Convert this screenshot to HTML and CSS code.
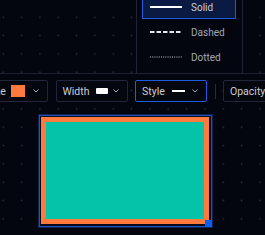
FILE: index.html
```html
<!DOCTYPE html>
<html lang="en">
<head>
    <meta charset="UTF-8">
    <meta name="viewport" content="width=device-width, initial-scale=1.0">
    <title>Shape style</title>
    <link rel="stylesheet" href="styles.css">
</head>
<body>
    <!-- 上方区域 + 线型下拉菜单 -->
    <div class="top">
        <ul class="menu">
            <li class="item selected">
                <svg class="preview" width="32" height="4"><line x1="0" y1="2" x2="32" y2="2" stroke="#fff" stroke-width="2"/></svg>
                <span>Solid</span>
            </li>
            <li class="item">
                <svg class="preview" width="32" height="4"><line x1="0" y1="2" x2="32" y2="2" stroke="#e6e8ee" stroke-width="2" stroke-dasharray="4.5 2"/></svg>
                <span>Dashed</span>
            </li>
            <li class="item">
                <svg class="preview" width="32" height="4"><line x1="0" y1="2" x2="32" y2="2" stroke="#c4c8d2" stroke-width="1" stroke-dasharray="1 1.2"/></svg>
                <span>Dotted</span>
            </li>
        </ul>
    </div>

    <!-- 工具栏 -->
    <div class="toolbar">
        <div class="btn btn-stroke">
            <span>Stroke</span>
            <i class="swatch"></i>
            <svg class="chev" width="6" height="4"><path d="M0.5 0.5 L3 3 L5.5 0.5" fill="none" stroke="#a9aeb9" stroke-width="1"/></svg>
        </div>
        <div class="btn">
            <span>Width</span>
            <i class="width-chip"></i>
            <svg class="chev" width="6" height="4"><path d="M0.5 0.5 L3 3 L5.5 0.5" fill="none" stroke="#a9aeb9" stroke-width="1"/></svg>
        </div>
        <div class="btn active">
            <span>Style</span>
            <i class="style-line"></i>
            <svg class="chev" width="6" height="4"><path d="M0.5 0.5 L3 3 L5.5 0.5" fill="none" stroke="#a9aeb9" stroke-width="1"/></svg>
        </div>
        <i class="sep"></i>
        <div class="btn">
            <span>Opacity</span>
        </div>
    </div>

    <!-- 画布 -->
    <div class="canvas">
        <div class="selection">
            <div class="shape"></div>
            <i class="handle"></i>
        </div>
    </div>
</body>
</html>
```

FILE: styles.css
```css
* {
    margin: 0;
    padding: 0;
    box-sizing: border-box;
}
ul {
    list-style: none;
}
body {
    width: 265px;
    height: 235px;
    overflow: hidden;
    font-family: Roboto, "Liberation Sans", sans-serif;
    color: #c9cdd6;
    background-color: #03050f;
    background-image: radial-gradient(circle, #262a3b 0.8px, transparent 1.1px);
    background-size: 18.33px 18.33px;
    background-position: -5.9px 8.1px;
}
.top {
    height: 73px;
    position: relative;
}
/* 下拉菜单 */
.menu {
    position: absolute;
    left: 136px;
    top: -6px;
    width: 107px;
    height: 80px;
    padding: 0 6px 0 5px;
    background: #04060f;
    border: 1px solid #1f2334;
    display: flex;
    flex-direction: column;
    gap: 1px;
}
.item {
    height: 24px;
    display: flex;
    align-items: center;
    padding-left: 7px;
    border: 1px solid transparent;
    font-size: 10px;
    color: #a3a8b4;
}
.item .preview {
    margin-right: 9px;
}
.item.selected {
    background: #0a1a42;
    border-color: #1b5ce0;
    color: #c9cdd6;
}
/* 工具栏 */
.toolbar {
    border-top: 1px solid #1b1f2e;
    padding: 6px 0;
    margin-left: -31px;
    display: flex;
    align-items: center;
    gap: 7.5px;
    width: 400px;
}
.btn {
    height: 22px;
    width: 72px;
    flex-shrink: 0;
    display: flex;
    align-items: center;
    padding: 0 8px 0 6px;
    border: 1px solid #22263a;
    border-radius: 2px;
    background: #05070f;
    font-size: 10.5px;
    white-space: nowrap;
}
.btn-stroke {
    width: 79px;
}
.btn.active {
    border-color: #1b5ce0;
}
.chev {
    margin-left: auto;
}
.swatch {
    width: 14px;
    height: 12px;
    margin-left: 5px;
    background: #ff7a3c;
}
.width-chip {
    width: 12px;
    height: 6px;
    margin-left: 6px;
    background: #fff;
    border-radius: 1px;
}
.style-line {
    width: 13px;
    height: 2px;
    margin-left: 7px;
    background: #fff;
}
.sep {
    width: 1px;
    height: 15px;
    background: #262a3b;
    flex-shrink: 0;
}
/* 画布图形 */
.canvas {
    padding: 7px 0 0 39px;
}
.selection {
    position: relative;
    width: 173px;
    height: 112px;
    border: 1px solid #2152bd;
    padding: 1px;
    background: #050a1e;
    box-shadow: 0 0 0 1px #0c2252;
}
.shape {
    width: 168px;
    height: 107px;
    border: 5px solid #ff7a3c;
    background: #05c3a9;
}
.handle {
    position: absolute;
    left: 165px;
    top: 104px;
    width: 7px;
    height: 7px;
    background: #0d5ff0;
}
```
